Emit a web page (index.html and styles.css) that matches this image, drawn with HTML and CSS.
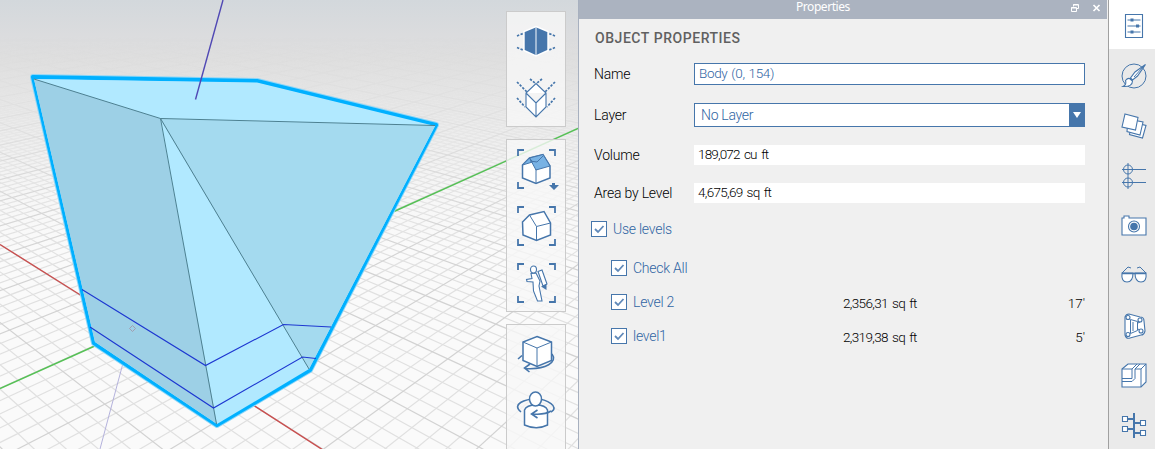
FILE: index.html
```
<!DOCTYPE html>
<html lang="en">
<head>
<meta charset="utf-8">
<title>Properties</title>
<link rel="stylesheet" href="styles.css">
</head>
<body>
<div class="app">
  <main class="viewport">
    <canvas class="grid" width="578" height="449"></canvas>
    <svg class="model" width="578" height="449" viewBox="0 0 578 449">
      <path class="axis-x" d="M0 244.5L82 296M253 405L323 450"/>
      <path class="axis-y" d="M0 388.5L97 345M394 211.500L578 128.500"/>
      <path class="axis-z faint" d="M122.500 365L100 449"/>
      <path class="halo" d="M33 77L257 81L436 125L310 370L217 425L94 343Z"/>
      <path class="outline" d="M33 77L257 81L436 125L310 370L217 425L94 343Z"/>
      <path fill="#b1e9ff" d="M34 79L257 82.500L435 126L309 369L217 424L95 342Z"/>
      <path fill="#9dd0e6" d="M34 79L160 118.500L217 424L95 342Z"/>
      <path fill="#a4daef" d="M160 119L435 126L309 369Z"/>
      <path class="edge" d="M34 79L160.500 118.500L435 125.500M160.500 118.500L216.500 424M160.500 118.500L309 369"/>
      <path class="level" d="M82 289.500L205.500 365.500L283.500 324.500L331 327M90 327L213.500 408L302.500 357L316 358.500"/>
      <path class="axis-z" d="M223 0L195.500 99.500"/>
      <path class="origin" d="M132.500 325.500l3 3-3 3-3-3z"/>
    </svg>
    <div class="tools">
      <div class="group g1">
        <svg width="40" height="40" viewBox="0 0 40 40"><path class="dots" d="M1 15l6-2.500M1 26.500l6 2.500M39 15l-6-2.500M39 26.500l-6 2.500"/><path d="M20 5.500l12 5v19l-12 5.500-12-5.500v-19z" fill="#4676ab" stroke="#fff" stroke-width="1.400"/><path d="M20 6v28" stroke="#dce7f2" stroke-width="1.200"/></svg>
        <svg width="40" height="40" viewBox="0 0 40 40"><path class="dots" d="M1 4l10 10M1 20l8 9M39 4l-10 10M39 20l-8 9M14 1l5 4M26 1l-5 4"/><path class="ink" d="M20 5.500l10 9.500v14l-10 10-10-10v-14zM10 15l10 10 10-10M20 25v14"/></svg>
      </div>
      <div class="group g2">
        <svg width="40" height="40" viewBox="0 0 40 40"><path class="corner" d="M2 7V1h6M33 1h6v6M2 33v6h6"/><path class="ink thick" d="M6.500 16L13.500 9l13.500-3.500L34 17v12l-14 5.500L6.500 29z"/><path d="M13.500 9L27 5.500 34 17l-14 4zM6.500 16l7-7 3 4z" fill="#78b2e4" stroke="#4676ab"/><path class="line" d="M20 20v14M14 12l7 1 6-6"/><path d="M33 36h3v-2h3v2h4l-5 5-5-5z" fill="#4676ab"/></svg>
        <svg width="40" height="40" viewBox="0 0 40 40"><path class="corner" d="M2 7V1h6M33 1h6v6M2 33v6h6M33 39h6v-6"/><path class="ink thick" d="M6.500 16L13.500 9 28 5.500 34.500 17v12L20.500 34.500 7 29z"/><path class="line" d="M13.500 9l7 11.500L34.500 17M20.500 20.500v14"/></svg>
        <svg width="40" height="40" viewBox="0 0 40 40"><path class="corner" d="M2 7V1h6M33 1h6v6M2 33v6h6M33 39h6v-6"/><path class="ink" d="M15 10.500l5-.5 4 8-1 5 3 15h-4.500L17.500 28l-.500-9-6-.500-.500-2 5.500-1z"/><path class="ink" d="M22 8.500l4-1.500 5 14-4 2z"/><ellipse class="ink" cx="17.500" cy="6.500" rx="3" ry="3.500"/><path d="M25 23.500l5.500-2.500v6z" fill="#4676ab"/></svg>
      </div>
      <div class="group g3">
        <svg width="40" height="40" viewBox="0 0 40 40"><path class="orbit" d="M2 24l4-3.500M36 19c6 8-6 16-27 14.500M14 29l-5.500 4 5 4"/><path class="ink thick" d="M21 1.500L35.500 7v18.500L21 31.500 7 25.500V7z"/><path class="line" d="M7 7l14 6 14.500-6M21 13v18"/></svg>
        <svg width="40" height="40" viewBox="0 0 40 40"><path class="orbit" d="M5 20C-5 12 9 7 20 7s24 8 15 13"/><path class="ink thick" d="M8.500 18q2-5 11.500-5t11.500 5v15q-11 5.500-23 0z"/><ellipse class="ink thick" cx="19.500" cy="7" rx="6" ry="7"/><path class="orbit" d="M35 19q-6 4-18 3M21.500 18l-6 4 6 4"/></svg>
        <svg width="40" height="40" viewBox="0 0 40 40"><path d="M17 3l5-3v5h-5zM29 0h9v5h-9z" fill="#b9c8dc"/></svg>
      </div>
    </div>
  </main>

  <section class="panel">
    <header class="titlebar">
      <span class="title">Properties</span>
      <svg class="win" width="34" height="11" viewBox="0 0 34 11"><path d="M3.500 3.500v-2h5v4h-2M1.500 4.500h5v4h-5zM3 2h5M1 5h5" fill="none" stroke="#fff"/><path d="M23.500 2l6 6m0-6l-6 6" stroke="#fff" stroke-width="1.700"/></svg>
    </header>
    <h1>OBJECT PROPERTIES</h1>
    <div class="row r-name"><label>Name</label><div class="field boxed">Body (0, 154)</div></div>
    <div class="row r-layer"><label>Layer</label><div class="field boxed select">No Layer<span class="drop"><svg width="8" height="6" viewBox="0 0 8 6"><path d="M0 0h8L4 6z" fill="#fff"/></svg></span></div></div>
    <div class="row r-volume"><label>Volume</label><div class="field">189,072 cu ft</div></div>
    <div class="row r-area"><label>Area by Level</label><div class="field">4,675,69 sq ft</div></div>
    <div class="check use"><span class="box"><svg width="14" height="14" viewBox="0 0 14 14"><path d="M3 7l3 3 5.500-6"/></svg></span><span>Use levels</span></div>
    <div class="levels">
      <div class="check"><span class="box"><svg width="14" height="14" viewBox="0 0 14 14"><path d="M3 7l3 3 5.500-6"/></svg></span><span>Check All</span></div>
      <div class="check"><span class="box"><svg width="14" height="14" viewBox="0 0 14 14"><path d="M3 7l3 3 5.500-6"/></svg></span><span class="nm">Level 2</span><span class="area">2,356,31 sq ft</span><span class="ht">17'</span></div>
      <div class="check"><span class="box"><svg width="14" height="14" viewBox="0 0 14 14"><path d="M3 7l3 3 5.500-6"/></svg></span><span class="nm">level1</span><span class="area">2,319,38 sq ft</span><span class="ht">5'</span></div>
    </div>
  </section>

  <nav class="side">
    <div class="tab on"><svg width="26" height="26" viewBox="0 0 26 26"><path class="ink" d="M4.500 1.500h17v23h-17z"/><path class="line" d="M6.500 7h13M6.500 13h13M6.500 19h13"/><path d="M9.500 5.500h3v3h-3zM15 11.500h3v3h-3zM9.500 17.500h3v3h-3z" fill="#4676ab"/></svg></div>
    <div class="tab"><svg width="26" height="26" viewBox="0 0 26 26"><circle class="line" cx="13" cy="13" r="12"/><path class="ink" d="M24.500 1.500L14 9l-4.500 6 2 2 5-4zM8.500 15.500l3 2.500q0 6-9.500 5.500 4-2 2.500-6 2-2.500 4-2z"/><path class="line" d="M22 4l-9 10"/></svg></div>
    <div class="tab"><svg width="26" height="26" viewBox="0 0 26 26"><path class="ink" d="M11 9l14 3.500-3.500 12.500-13-3.500z"/><path class="ink" d="M7 6l15 3-3 13-13-3.500z"/><path class="ink" d="M4 1l13 3.500-2.500 12.500-13.500-3z"/></svg></div>
    <div class="tab"><svg width="26" height="26" viewBox="0 0 26 26"><circle class="line" cx="7" cy="6.500" r="4.500"/><circle class="line" cx="7" cy="19.500" r="4.500"/><path class="line" d="M1 6.500h24M1 19.500h24M7 0v26"/></svg></div>
    <div class="tab"><svg width="26" height="26" viewBox="0 0 26 26"><path class="ink" d="M1 5h2V3h5v2h17v17H1z"/><circle class="ink" cx="13" cy="13.500" r="5.500"/><circle cx="13" cy="13.500" r="3.800" fill="#4676ab"/></svg></div>
    <div class="tab"><svg width="26" height="26" viewBox="0 0 26 26"><path class="line" d="M1 10l6-6 3 1M25 10l-6-6-3 1"/><path class="ink" d="M1 10h11q0 9-6 9t-5-9zM14 10h11q1 9-5 9t-6-9z"/><path d="M1 10.500h24" stroke="#4676ab" stroke-width="1.500"/></svg></div>
    <div class="tab"><svg width="26" height="26" viewBox="0 0 26 26"><path class="ink" d="M4 4q1-3 4-3l11 3q4 0 4 4l1 10q-1 4-4 4L9 25q-4 1-5-3z"/><path class="line" d="M9.500 6.500l7 2v9l-7 3zM12 9v9M17 10l2-1M17 16l3 2"/><circle class="ink" cx="7" cy="4.500" r="2"/><circle class="ink" cx="19" cy="7" r="2"/><circle class="ink" cx="20" cy="18" r="2"/><circle class="ink" cx="7" cy="21.500" r="2"/></svg></div>
    <div class="tab"><svg width="26" height="26" viewBox="0 0 26 26"><path class="ink" d="M1 6l6-5h18v18l-5 5H1z"/><path class="line" d="M1 6h10v9.500H1M20 24V6h-6v9.500l-3 3H1M20 6l5-5M14 6l5-5M11 6l5-5"/></svg></div>
    <div class="tab"><svg width="26" height="26" viewBox="0 0 26 26"><path d="M13 0v25M5 6h8M5 16h8M13 10h8M13 20h8" fill="none" stroke="#4676ab" stroke-width="2"/><path class="ink" d="M1.500 3.500h5v5h-5zM1.500 13.500h5v5h-5zM19.500 7.500h5v5h-5zM19.500 17.500h5v5h-5z"/></svg></div>
  </nav>
</div>
<script src="grid.js"></script>
</body>
</html>
```
FILE: styles.css
```
* { box-sizing: border-box; }
body { margin: 0; overflow: hidden; font-family: Roboto, "Liberation Sans", sans-serif; font-size: 14px; }
.app { display: grid; grid-template-columns: 578px 530px 47px; width: 1155px; height: 449px; }
.viewport { position: relative; overflow: hidden; background: linear-gradient(#d3d8dc 0, #dbdcde 35px, #dfdfdf 60px, #ebebeb 120px, #f6f6f6 190px, #fafafa 250px); }
.grid, .model { position: absolute; inset: 0; }
.model path { fill: none; }
.model path[fill="#b1e9ff"] { fill: #b1e9ff; }
.model path[fill="#9dd0e6"] { fill: #9dd0e6; }
.model path[fill="#a4daef"] { fill: #a4daef; }
.model .axis-x { stroke: #c94f4f; stroke-width: 1.4; }
.model .axis-y { stroke: #55c155; stroke-width: 1.4; }
.model .axis-z { stroke: #5048b4; stroke-width: 1.4; }
.model .faint { stroke: #b4b2dc; stroke-width: 1; }
.model .halo { stroke: #8cd6f8; stroke-width: 6; stroke-linejoin: round; }
.model .outline { stroke: #00b0ff; stroke-width: 4; stroke-linejoin: round; }
.model .edge { stroke: #4d8091; stroke-width: 1; }
.model .level { stroke: #1d37d1; stroke-width: 1.1; }
.model .origin { stroke: #a29daf; }
.tools { position: absolute; left: 506px; top: 11px; width: 60px; display: flex; flex-direction: column; gap: 12px; }
.group { display: flex; flex-direction: column; align-items: center; border: 1px solid #cbcbcb; background: rgba(248, 248, 248, .8); }
.g1 { height: 116px; padding-top: 9px; gap: 17px; }
.g2 { height: 173px; padding-top: 9px; gap: 17px; }
.g3 { height: 174px; padding-top: 10px; gap: 17px; }
.group svg { flex: none; overflow: visible; }
.ink { fill: #fff; stroke: #4676ab; stroke-width: 1.1; }
.thick { stroke-width: 1.5; }
.line { fill: none; stroke: #4676ab; stroke-width: 1; }
.orbit { fill: none; stroke: #4676ab; stroke-width: 1.6; }
.corner { fill: none; stroke: #4676ab; stroke-width: 1.8; }
.dots { fill: none; stroke: #4676ab; stroke-width: 1.7; stroke-dasharray: 2.4 1.4; }
.panel { background: #f0f0f0; border-left: 1px solid #a7b0bf; display: flex; flex-direction: column; font-weight: 300; }
.titlebar { height: 19px; flex: none; margin-right: 1px; background: #abb3c0; color: #fff; display: flex; align-items: center; }
.title { flex: 1; padding-left: 217px; font: 12px/13px "Noto Sans", sans-serif; letter-spacing: -.45px; padding-bottom: 7px; }
.win { margin-right: 3px; margin-top: -2px; }
h1 { margin: 11px 0 0 16px; height: 16px; font-size: 14px; line-height: 16px; font-weight: 500; letter-spacing: .55px; color: #606060; }
.row { display: grid; grid-template-columns: 100px 391px; padding-left: 15px; align-items: center; color: #000; }
.row label { letter-spacing: -.2px; line-height: 16px; padding-bottom: 1px; }
.r-name { margin-top: 17px; }
.r-layer { margin-top: 18px; }
.r-volume, .r-area { margin-top: 18px; }
.field { height: 20px; line-height: 19px; padding-left: 4px; background: #fff; font-size: 13.5px; letter-spacing: -.85px; word-spacing: 2px; }
.r-area .field { letter-spacing: -.7px; word-spacing: 1.5px; }
.r-name .field { letter-spacing: -.35px; word-spacing: 1px; }
.boxed { height: 22px; border: 1px solid #4676ab; color: #2f65a3; }
.r-layer .select { height: 24px; line-height: 22px; padding-left: 6px; display: flex; justify-content: space-between; font-size: 14px; letter-spacing: -.3px; word-spacing: 0; }
.drop { width: 15px; background: #4676ab; display: flex; align-items: center; justify-content: center; }
.check { display: flex; align-items: center; height: 16px; color: #2f65a3; line-height: 16px; letter-spacing: -.25px; }
.use { margin: 18px 0 0 12px; }
.box { width: 16px; height: 16px; flex: none; border: 1px solid #4676ab; background: #fff; margin-right: 6px; }
.box svg { display: block; }
.box path { fill: none; stroke: #5f88b8; stroke-width: 1.8; }
.levels { margin: 23px 0 0 32px; display: flex; flex-direction: column; gap: 18px; }
.nm { width: 210px; }
.area, .ht { color: #000; font-size: 13.5px; letter-spacing: -.65px; word-spacing: 1.5px; padding-top: 1px; }
.area { width: 150px; }
.ht { width: 92px; text-align: right; letter-spacing: 0; }
.side { background: #eaeaea; border-left: 1px solid #a0a0a0; display: flex; flex-direction: column; }
.tab { height: 50px; flex: none; display: flex; align-items: center; justify-content: center; padding: 2px 0 0 4px; }
.on { background: #fff; height: 49px; margin-bottom: 1px; }
.side svg { overflow: visible; }
```
FILE: grid.js
```
// Ground plane drawn in two-point perspective around the scene origin.
const ctx = document.querySelector('.grid').getContext('2d');
const H = -95;
const O = [132.5, 328.5];
const R = [O[0] - (O[1] - H) / 0.634, H];
const G = [O[0] + (O[1] - H) / 0.45, H];
const a = 0.0148, b = 0.0155;

function project(u, v) {
  const w = 1 + u * a + v * b;
  return [
    (O[0] + u * a * R[0] + v * b * G[0]) / w,
    (O[1] + u * a * R[1] + v * b * G[1]) / w
  ];
}

function segment(u0, v0, u1, v1, major) {
  const p = project(u0, v0), q = project(u1, v1);
  ctx.strokeStyle = major ? '#d2d2d2' : '#e0e0e0';
  ctx.beginPath();
  ctx.moveTo(p[0], p[1]);
  ctx.lineTo(q[0], q[1]);
  ctx.stroke();
}

ctx.lineWidth = 1.2;
const N = 400;
for (const majorPass of [false, true]) {
  for (let i = -100; i <= N; i++) {
    const major = i % 5 === 0;
    if (major !== majorPass) continue;
    // Start each line just in front of the camera plane.
    const v0 = (0.3 - 1 - i * a) / b;
    const u0 = (0.3 - 1 - i * b) / a;
    segment(i, v0, i, N * 2, major);
    segment(u0, i, N * 2, i, major);
  }
}

// Fade the ground out toward the horizon.
const fade = ctx.createLinearGradient(0, 0, 0, 449);
fade.addColorStop(0.08, 'rgba(0,0,0,0)');
fade.addColorStop(0.2, 'rgba(0,0,0,.25)');
fade.addColorStop(0.4, 'rgba(0,0,0,.8)');
fade.addColorStop(0.6, 'rgba(0,0,0,1)');
ctx.globalCompositeOperation = 'destination-in';
ctx.fillStyle = fade;
ctx.fillRect(0, 0, 578, 449);
```
